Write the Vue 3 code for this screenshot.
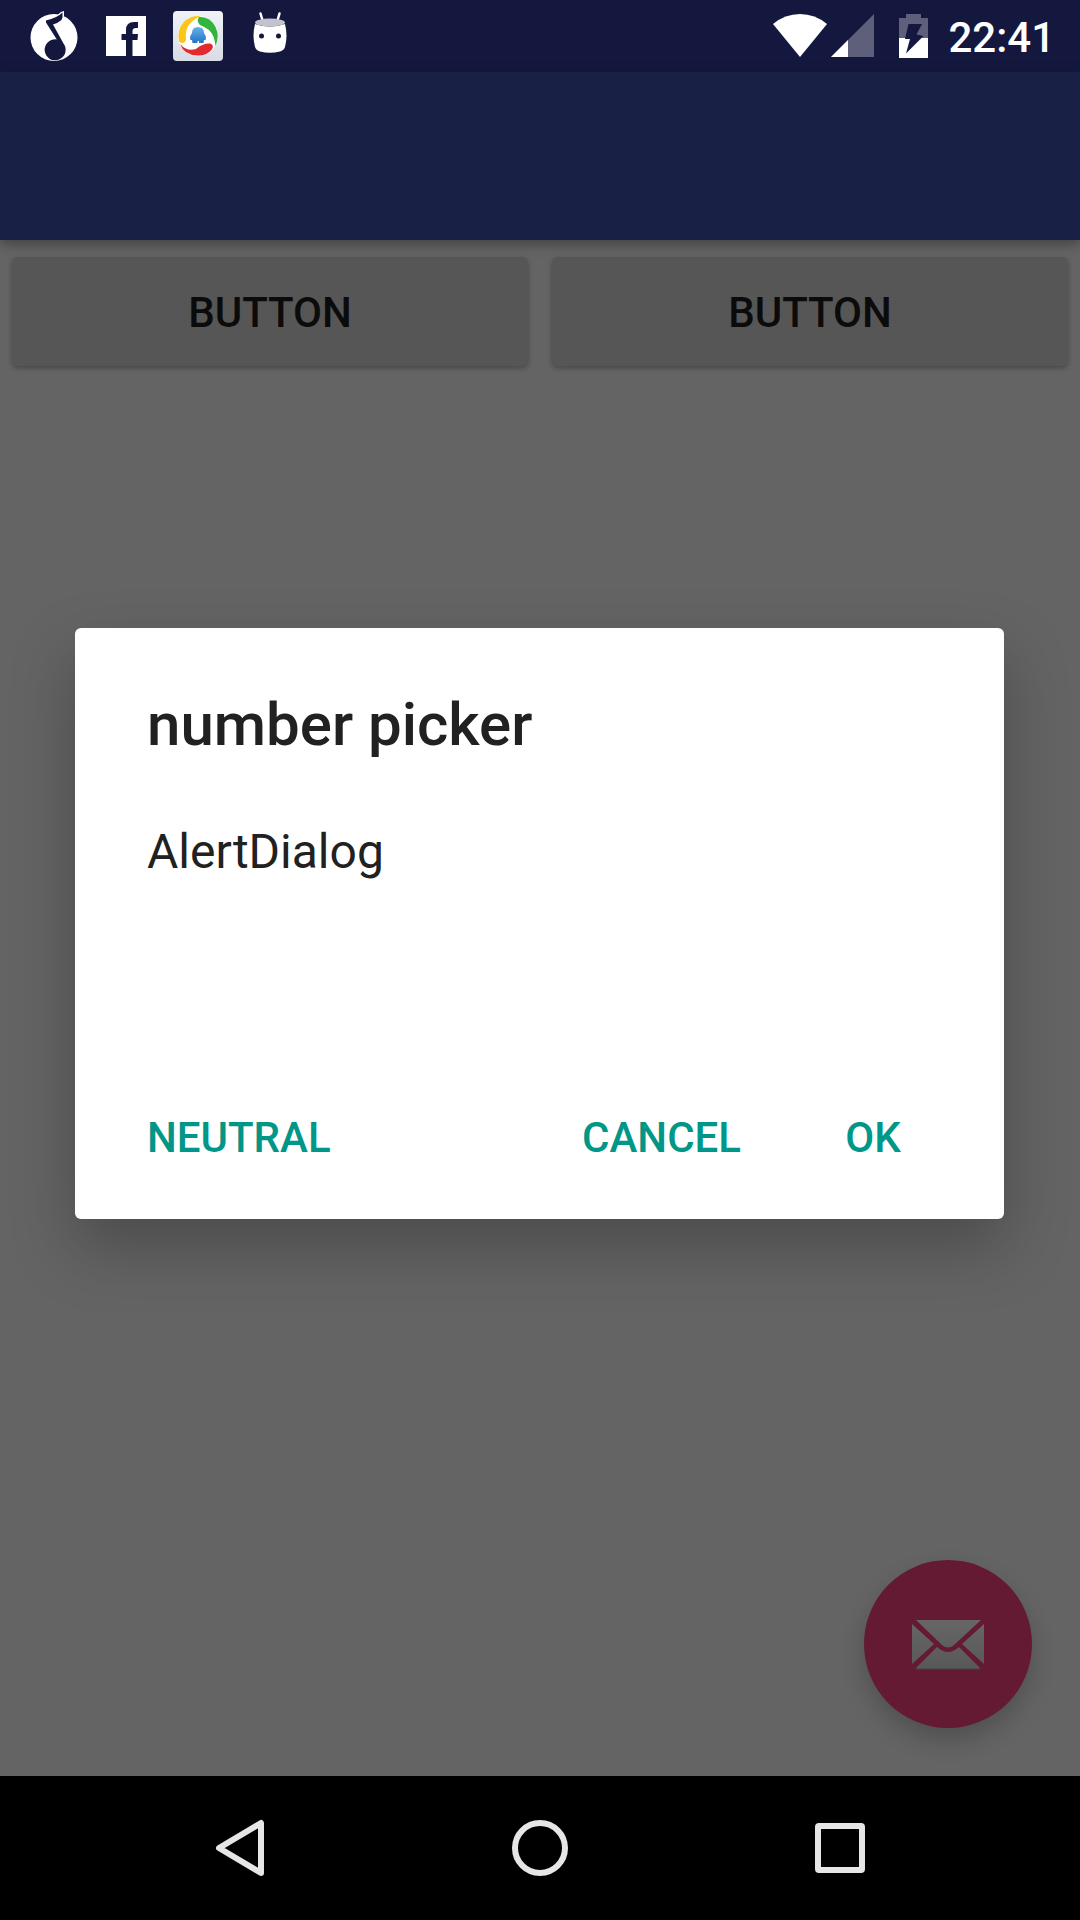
<script setup>
import { ref } from 'vue'

const open = ref(true)
const labels = ['Button', 'Button']
</script>

<template>
  <div class="screen">
    <header class="status">
      <div class="notices">
        <svg class="notice" viewBox="0 0 72 72" aria-hidden="true">
          <circle cx="36" cy="37.5" r="23.5" fill="#fff" />
          <path d="M28 20Q38 17 43 12L46 11V24L38 28Z" fill="#fff" />
          <path d="M28 20.500Q39 18 44.500 12.500Q45 17 43.500 20Q40 23 35 24.500L45.500 43.500A10.500 10.500 0 1 1 38.800 39.500L28 22.500Z" fill="#14183e" />
        </svg>
        <svg class="notice" viewBox="0 0 72 72" aria-hidden="true">
          <path fill="#fff" d="M16 16H56V56H42.500V40H47.500L48 34H42.500V31Q42.500 28 46 28H48V22H44Q36 22 36 30V34H31.500V40H36V56H16Z" />
        </svg>
        <svg class="notice" viewBox="0 0 72 72" aria-hidden="true">
          <defs>
            <linearGradient id="tile" x2="0" y2="1"><stop stop-color="#f0f2f8" /><stop offset="1" stop-color="#d9dce6" /></linearGradient>
            <linearGradient id="blue" x2="0" y2="1"><stop stop-color="#64b2ea" /><stop offset="1" stop-color="#2474c4" /></linearGradient>
          </defs>
          <rect x="11" y="11" width="50" height="50" rx="4" fill="url(#tile)" />
          <circle cx="36" cy="36" r="20" fill="#fff" />
          <path d="M38.500 16A20 20 0 0 0 17 41Q18 43.500 21 43Q24 42.500 24 38Q22 24 38.500 16Z" fill="#fbc51c" />
          <path d="M37 17Q48 16 53.500 27Q58 36 53.500 46Q52.500 35 47 30Q43 27 38 25Q34 21 37 17Z" fill="#33b43a" />
          <path d="M18 44Q25 52 34 49Q41 43 48 43.500Q53 45 49.500 50Q44 56 35.500 55.500Q22 55 18 44Z" fill="#e02b30" />
          <path d="M30 33Q30 27 36 27Q42 27 42 33Q45 37 43.500 40H42L41.500 43H37V41H35.500V43H30.500L30 40H28.500Q27 37 30 33Z" fill="url(#blue)" />
        </svg>
        <svg class="notice" viewBox="0 0 72 72" aria-hidden="true">
          <path d="M26.500 13.500 29 22M45.500 13.500 43 22" stroke="#fff" stroke-width="2.500" stroke-linecap="round" />
          <path d="M21 24Q36 29 51 24Q54 36 51 47Q50 50 46 51.500Q36 54 26 51.500Q22 50 21 47Q18 36 21 24Z" fill="#fff" />
          <ellipse cx="36" cy="22.500" rx="15" ry="4" fill="#c2c3cf" />
          <circle cx="27.500" cy="36" r="2.500" fill="#14183e" />
          <circle cx="44.500" cy="36" r="2.500" fill="#14183e" />
        </svg>
      </div>
      <div class="system">
        <svg class="wifi" viewBox="0 0 54 44" aria-hidden="true">
          <path d="M0 10Q12 0 27 0T54 10L27 43Z" fill="#fff" />
        </svg>
        <svg class="signal" viewBox="0 0 43 44" aria-hidden="true">
          <path d="M0 43 43 0V43Z" fill="#5d5f7b" />
          <path d="M0 43 17 26V43Z" fill="#fff" />
        </svg>
        <svg class="battery" viewBox="0 0 29 44" aria-hidden="true">
          <path d="M7 0H22V4H29V24H0V4H7Z" fill="#5d5f7b" />
          <path d="M0 24H29V44H0Z" fill="#fff" />
          <path d="M9.500 10H23L17.500 20.500 24.500 22 7 39.500 11 25H6Z" fill="#14183e" />
        </svg>
        <time class="clock">22:41</time>
      </div>
    </header>

    <div class="stage">
      <div class="appbar"></div>
      <main class="content">
        <div class="row">
          <button v-for="(label, i) in labels" :key="i" class="raised" type="button" @click="open = true">{{ label }}</button>
        </div>
        <button class="fab" type="button" aria-label="Send mail">
          <svg class="mail" viewBox="0 0 72 50" aria-hidden="true">
            <defs>
              <linearGradient id="paper" gradientUnits="userSpaceOnUse" x1="0" y1="0" x2="0" y2="50"><stop stop-color="#666" /><stop offset="1" stop-color="#585858" /></linearGradient>
            </defs>
            <g fill="url(#paper)">
              <path d="M4 0H69L42 25Q36 30 30 25Z" />
              <path d="M0 4 22 24 0 44Z" />
              <path d="M72 4 50 24 72 44Z" />
              <path d="M25 27 29 30Q36 34 43 30L47 27 68 48 67 49H5L4 48Z" />
            </g>
            <path d="M5 49H67" stroke="#444" />
          </svg>
        </button>
      </main>

      <div v-if="open" class="overlay">
        <section class="dialog" role="alertdialog" aria-modal="true" aria-labelledby="dialog-title" aria-describedby="dialog-text">
          <h2 id="dialog-title" class="title">number picker</h2>
          <p id="dialog-text" class="message">AlertDialog</p>
          <div class="actions">
            <button class="flat neutral" type="button" @click="open = false">Neutral</button>
            <button class="flat" type="button" @click="open = false">Cancel</button>
            <button class="flat" type="button" @click="open = false">OK</button>
          </div>
        </section>
      </div>
    </div>

    <nav class="navbar">
      <button class="key" type="button" aria-label="Back">
        <svg viewBox="0 0 72 72" aria-hidden="true"><path d="M57 11V61L15 36Z" /></svg>
      </button>
      <button class="key" type="button" aria-label="Home">
        <svg viewBox="0 0 72 72" aria-hidden="true"><circle cx="36" cy="36" r="25" /></svg>
      </button>
      <button class="key" type="button" aria-label="Recent apps">
        <svg viewBox="0 0 72 72" aria-hidden="true"><rect x="14" y="14" width="44" height="44" rx="1" /></svg>
      </button>
    </nav>
  </div>
</template>

<style>
body {
  margin: 0;
  background: #000;
}
</style>

<style scoped>
.screen {
  display: flex;
  flex-direction: column;
  min-height: 100vh;
  font-family: Roboto, "Noto Sans", sans-serif;
}

button {
  margin: 0;
  border: 0;
  font: inherit;
  cursor: pointer;
}

svg {
  display: block;
}

.status {
  display: flex;
  justify-content: space-between;
  align-items: center;
  height: 72px;
  padding: 0 25px 0 18px;
  background: #14183e;
}

.notices,
.system {
  display: flex;
}

.notice {
  width: 72px;
  height: 72px;
}

.system {
  align-items: center;
}

.wifi {
  width: 54px;
  height: 44px;
  margin-right: 4px;
}

.signal {
  width: 43px;
  height: 44px;
  margin-right: 25px;
}

.battery {
  width: 29px;
  height: 44px;
  margin-right: 20px;
}

.clock {
  padding-top: 4px;
  color: #fff;
  font-size: 42px;
  font-weight: 500;
  line-height: 48px;
}

.stage {
  position: relative;
  display: flex;
  flex: 1;
  flex-direction: column;
}

.appbar {
  position: relative;
  height: 168px;
  background: #192045;
  box-shadow: 0 4px 12px rgba(0, 0, 0, 0.35);
}

.content {
  display: flex;
  flex: 1;
  flex-direction: column;
  justify-content: space-between;
  padding: 17px 12px 48px;
  background: #646464;
}

.row {
  display: flex;
  gap: 24px;
}

.raised {
  flex: 1;
  height: 109px;
  padding: 2px 24px 0;
  border-radius: 6px;
  background: #565656;
  box-shadow: 0 2px 5px rgba(0, 0, 0, 0.3);
  color: #0b0b0b;
  font-size: 42px;
  font-weight: 500;
  text-transform: uppercase;
}

.fab {
  display: flex;
  align-items: center;
  justify-content: center;
  align-self: flex-end;
  width: 168px;
  height: 168px;
  margin-right: 36px;
  padding: 2px 0 0;
  border-radius: 50%;
  background: #641a32;
  box-shadow: 0 12px 24px rgba(0, 0, 0, 0.2);
}

.mail {
  width: 72px;
  height: 50px;
}

.overlay {
  position: absolute;
  inset: 0;
  display: flex;
  align-items: center;
  padding: 0 76px 1px 75px;
}

.dialog {
  display: flex;
  flex: 1;
  flex-direction: column;
  padding: 62px 35px 28px 48px;
  border-radius: 6px;
  background: #fff;
  box-shadow: 0 28px 64px rgba(0, 0, 0, 0.25);
  color: #212121;
}

.title {
  margin: 0 24px 64px;
  font-size: 60px;
  font-weight: 500;
  line-height: 70px;
}

.message {
  min-height: 259px;
  margin: 0 24px;
  font-size: 48px;
  line-height: 56px;
}

.actions {
  display: flex;
  gap: 12px;
}

.flat {
  min-width: 192px;
  height: 108px;
  padding: 0 24px;
  background: none;
  color: #009688;
  font-size: 42px;
  font-weight: 500;
  text-transform: uppercase;
}

.neutral {
  margin-right: auto;
}

.navbar {
  display: flex;
  align-items: center;
  justify-content: center;
  height: 144px;
  background: #000;
}

.key {
  display: flex;
  align-items: center;
  justify-content: center;
  width: 300px;
  height: 144px;
  padding: 0;
  background: none;
}

.key svg {
  width: 72px;
  height: 72px;
  fill: none;
  stroke: #e6e6e6;
  stroke-width: 6;
  stroke-linejoin: round;
}
</style>
